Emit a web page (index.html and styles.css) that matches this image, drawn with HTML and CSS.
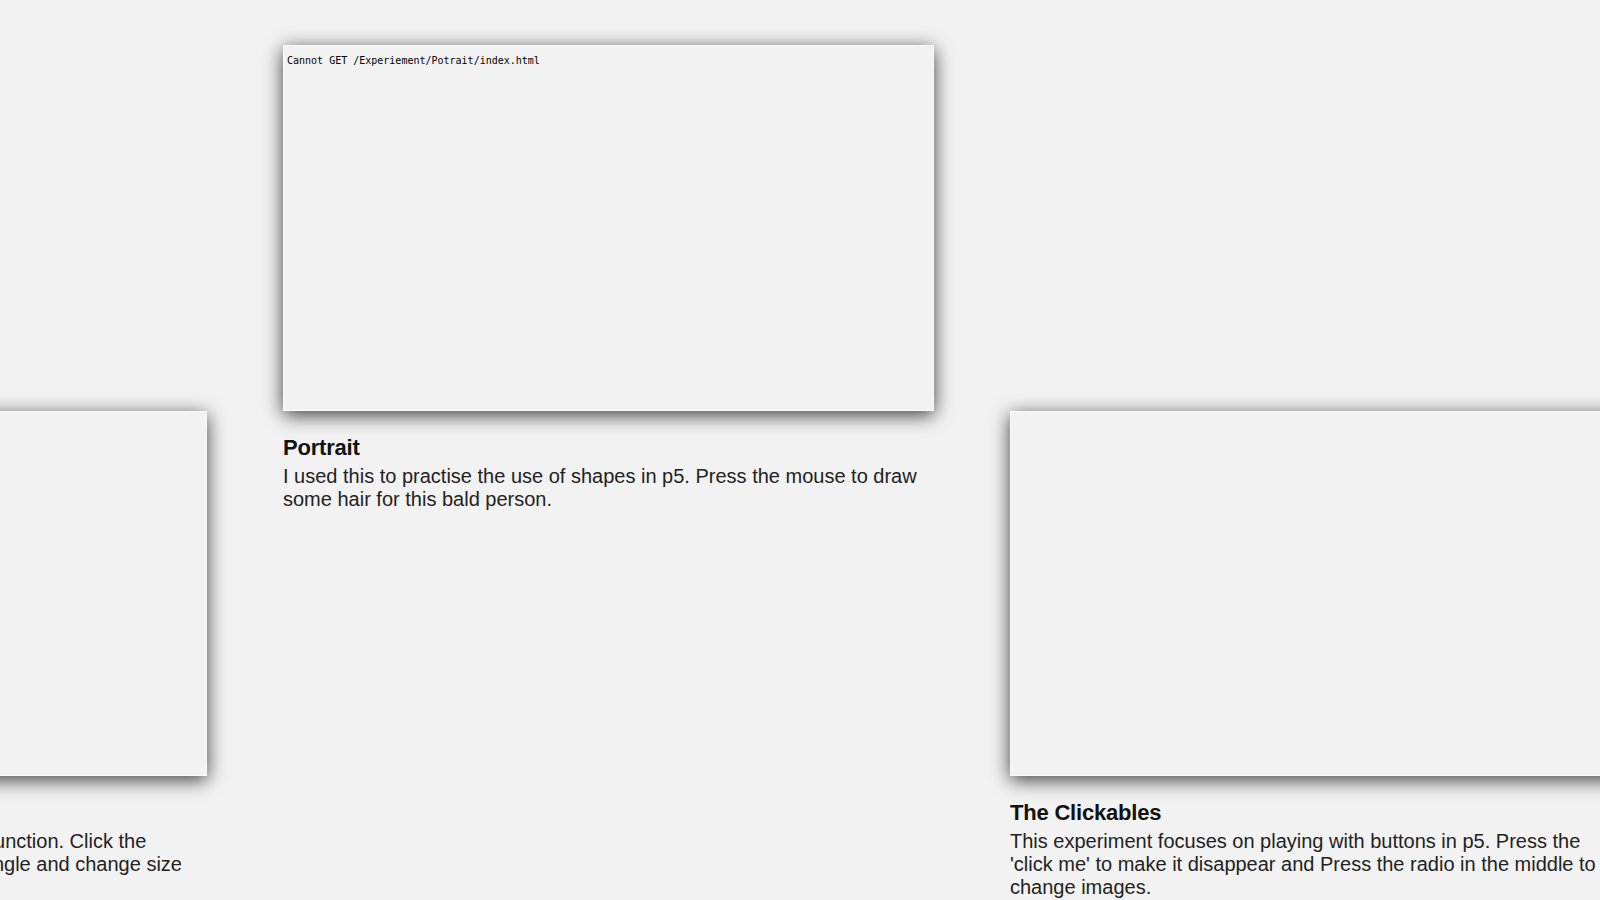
FILE: index.html
```html
<!DOCTYPE html>
<html lang="en">
<head>
<meta charset="utf-8">
<title>Experiments</title>
<link rel="stylesheet" href="styles.css">
</head>
<body>
<main class="carousel">
  <div class="track">
    <article class="card side">
      <div class="frame"></div>
      <h2 class="title">Rectangles</h2>
      <p class="desc">In this little experiment I explored the p5 random function. Click the mouse anywhere in the page to draw a new rectangle and change size each time.</p>
    </article>
    <article class="card active">
      <div class="frame"><pre class="frame-msg">Cannot GET /Experiement/Potrait/index.html</pre></div>
      <h2 class="title">Portrait</h2>
      <p class="desc">I used this to practise the use of shapes in p5. Press the mouse to draw some hair for this bald person.</p>
    </article>
    <article class="card side">
      <div class="frame"></div>
      <h2 class="title">The Clickables</h2>
      <p class="desc">This experiment focuses on playing with buttons in p5. Press the <span class="nowrap">'click me'</span> to make it disappear and Press the radio in the middle to change images.</p>
    </article>
  </div>
</main>
</body>
</html>
```

FILE: styles.css
```css
html, body {
  margin: 0;
  padding: 0;
  background: #f2f2f2;
  overflow: hidden;
  height: 100%;
}

body {
  font-family: "Liberation Sans", Arial, sans-serif;
  color: #222;
}

.carousel {
  padding-top: 45px;
}

.track {
  display: flex;
  align-items: flex-start;
  gap: 76px;
  margin-left: -444px;
}

.card {
  flex: 0 0 651px;
  width: 651px;
}

.card.side {
  margin-top: 366px;
}

.frame {
  height: 366px;
  box-sizing: border-box;
  background: #f2f2f2;
  border: 1px solid #f9f9f9;
  box-shadow: 0 4px 18px rgba(0, 0, 0, 0.75);
}

.card.side .frame {
  height: 365px;
}

.frame-msg {
  margin: 0;
  padding: 9px 0 0 3px;
  font-family: "DejaVu Sans Mono", "Liberation Mono", monospace;
  font-size: 10px;
  line-height: 12px;
  color: #000;
}

.title {
  margin: 24px 0 0;
  font-size: 22px;
  line-height: 26px;
  font-weight: 700;
  color: #111;
  letter-spacing: -0.2px;
}

.desc {
  margin: 4px 0 0;
  font-size: 20px;
  line-height: 23px;
  font-weight: 400;
}

.nowrap {
  white-space: nowrap;
}
```
